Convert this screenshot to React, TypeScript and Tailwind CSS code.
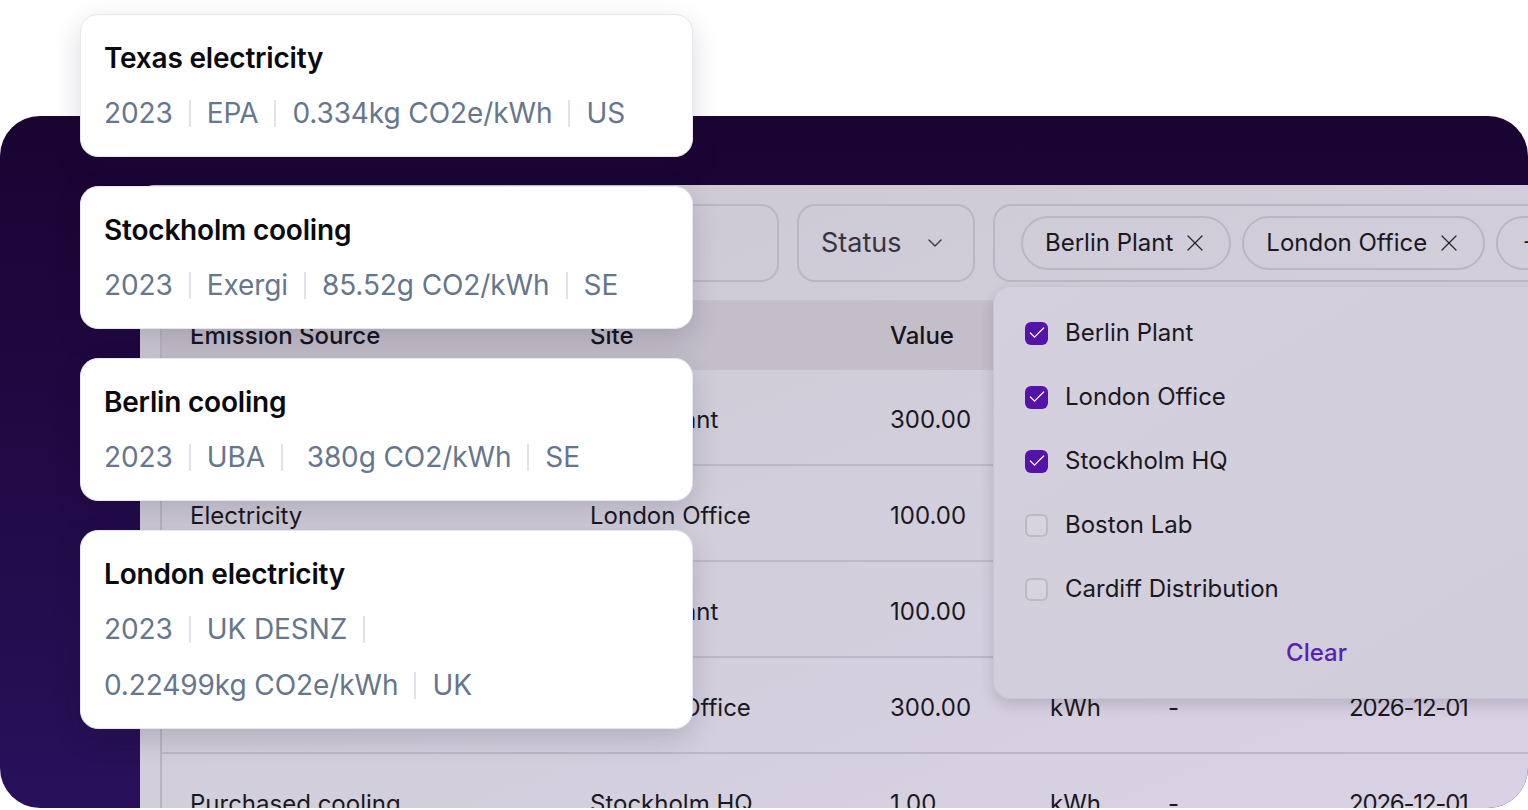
import { X, ChevronDown, Check } from "lucide-react";

type Factor = { title: string; parts: string[] };

const factors: Factor[] = [
  { title: "Texas electricity", parts: ["2023", "EPA", "0.334kg CO2e/kWh", "US"] },
  { title: "Stockholm cooling", parts: ["2023", "Exergi", "85.52g CO2/kWh", "SE"] },
  { title: "Berlin cooling", parts: ["2023", "UBA", "\u00a0380g CO2/kWh", "SE"] },
  { title: "London electricity", parts: ["2023", "UK DESNZ", "0.22499kg CO2e/kWh", "UK"] },
];

const rows = [
  ["Electricity", "Berlin Plant", "300.00", "kWh", "-", "2026-12-01"],
  ["Electricity", "London Office", "100.00", "kWh", "-", "2026-12-01"],
  ["Electricity", "Berlin Plant", "100.00", "kWh", "-", "2026-12-01"],
  ["Electricity", "London Office", "300.00", "kWh", "-", "2026-12-01"],
  ["Purchased cooling", "Stockholm HQ", "1.00", "kWh", "-", "2026-12-01"],
];

const sites = [
  { name: "Berlin Plant", on: true },
  { name: "London Office", on: true },
  { name: "Stockholm HQ", on: true },
  { name: "Boston Lab", on: false },
  { name: "Cardiff Distribution", on: false },
];

function FactorCard({ f }: { f: Factor }) {
  return (
    <div className="w-[613px] rounded-[18px] border border-[#e6e7ec] bg-white pl-[23px] pr-[22px] pt-[25px] pb-[23px] shadow-[0_10px_28px_rgba(24,12,48,0.16)]">
      <div className="text-[28px] leading-[36px] font-semibold text-[#0a0a0f] tracking-[-0.2px]">{f.title}</div>
      <div className="mt-[17px] flex flex-wrap gap-y-[16px] text-[28px] leading-[40px] text-[#66768b] tracking-[-0.1px]">
        {f.parts.map((p, i) => (
          <span key={i} className="flex items-center whitespace-pre">
            {p}
            {i < f.parts.length - 1 && (
              <span className="mx-[16px] h-[27px] w-[2px] bg-[#e0e3e8]" />
            )}
          </span>
        ))}
      </div>
    </div>
  );
}

function Chip({ label }: { label: string }) {
  return (
    <div className="flex h-[54px] shrink-0 items-center gap-[8px] rounded-full border-2 border-[#bbb6c4] pl-[22px] pr-[20px] text-[24px] text-[#1b1820]">
      <span>{label}</span>
      <X size={28} strokeWidth={1.1} className="text-[#2a2630]" />
    </div>
  );
}

export default function App() {
  return (
    <div className="relative h-[810px] w-[1528px] overflow-hidden bg-white font-['Inter',sans-serif]">
      <div className="h-full pt-[116px]">
        <div className="h-[692px] overflow-hidden rounded-[40px] bg-linear-to-b from-[#1a0432] to-[#28115a] pl-[140px] pt-[69px]">
          <div className="relative h-full w-[1560px] rounded-tl-[14px] bg-linear-to-br from-[#cbc7d2] via-[#d2cedb] to-[#dad2e6] pl-[20px] pt-[19px]">
            {/* filters */}
            <div className="flex h-[78px] gap-[18px]">
              <div className="w-[619px] rounded-[18px] border-2 border-[#bbb6c4]" />
              <div className="flex w-[178px] items-center justify-between rounded-[18px] border-2 border-[#bbb6c4] pl-[22px] pr-[26px] text-[27px] text-[#38343f]">
                <span>Status</span>
                <ChevronDown size={24} strokeWidth={1.4} className="text-[#3a3640]" />
              </div>
              <div className="relative flex flex-1 items-center gap-[11px] rounded-[18px] border-2 border-[#bbb6c4] pl-[26px]">
                <Chip label="Berlin Plant" />
                <Chip label="London Office" />
                <div className="flex h-[54px] w-[80px] shrink-0 items-center rounded-full border-2 border-[#bbb6c4] pl-[24px] text-[24px] text-[#1b1820]">
                  +1
                </div>

                {/* site picker */}
                <div className="absolute left-[-2px] top-[80px] z-10 w-[647px] rounded-[18px] border border-[#c9c4d1] bg-linear-to-br from-[#d5d0dd] to-[#d1ccd9] pl-[31px] pt-[14px] pb-[13px] shadow-[0_6px_14px_rgba(30,20,50,0.16)]">
                  {sites.map((s) => (
                    <div key={s.name} className="flex h-[64px] items-center gap-[17px] text-[24px] text-[#1b1820]">
                      {s.on ? (
                        <span className="flex h-[23px] w-[23px] items-center justify-center rounded-[6px] bg-[#5514a8]">
                          <Check size={20} strokeWidth={1.5} className="text-white" />
                        </span>
                      ) : (
                        <span className="h-[23px] w-[23px] rounded-[6px] border-2 border-[#bdb8c6] bg-[#d8d4de]" />
                      )}
                      <span>{s.name}</span>
                    </div>
                  ))}
                  <div className="flex h-[64px] items-center justify-center pr-[31px] text-[24px] font-medium text-[#5a1fb4]">
                    Clear
                  </div>
                </div>
              </div>
            </div>

            {/* table */}
            <div className="mt-[18px] border-l-2 border-[#b9b4c2]">
              <div className="grid h-[70px] grid-cols-[400px_300px_160px_118px_181px_1fr] items-center border-t border-[#c6c1cd] bg-[#c3beca] pl-[28px] text-[24px] font-medium text-[#17141c]">
                <span>Emission Source</span>
                <span>Site</span>
                <span>Value</span>
                <span>Unit</span>
                <span>Note</span>
                <span>Period</span>
              </div>
              {rows.map((r, i) => (
                <div
                  key={i}
                  className="grid h-[96px] grid-cols-[400px_300px_160px_118px_181px_1fr] items-center border-b-2 border-[#bdb8c8] pl-[28px] pt-[5px] text-[24px] text-[#1b1820]"
                >
                  {r.map((c, j) => (
                    <span key={j} className={j === 5 ? "tracking-[-1.2px]" : ""}>
                      {c}
                    </span>
                  ))}
                </div>
              ))}
            </div>
          </div>
        </div>
      </div>

      {/* emission factor cards */}
      <div className="absolute left-[80px] top-[14px] flex flex-col gap-[29px]">
        {factors.map((f) => (
          <FactorCard key={f.title} f={f} />
        ))}
      </div>
    </div>
  );
}
